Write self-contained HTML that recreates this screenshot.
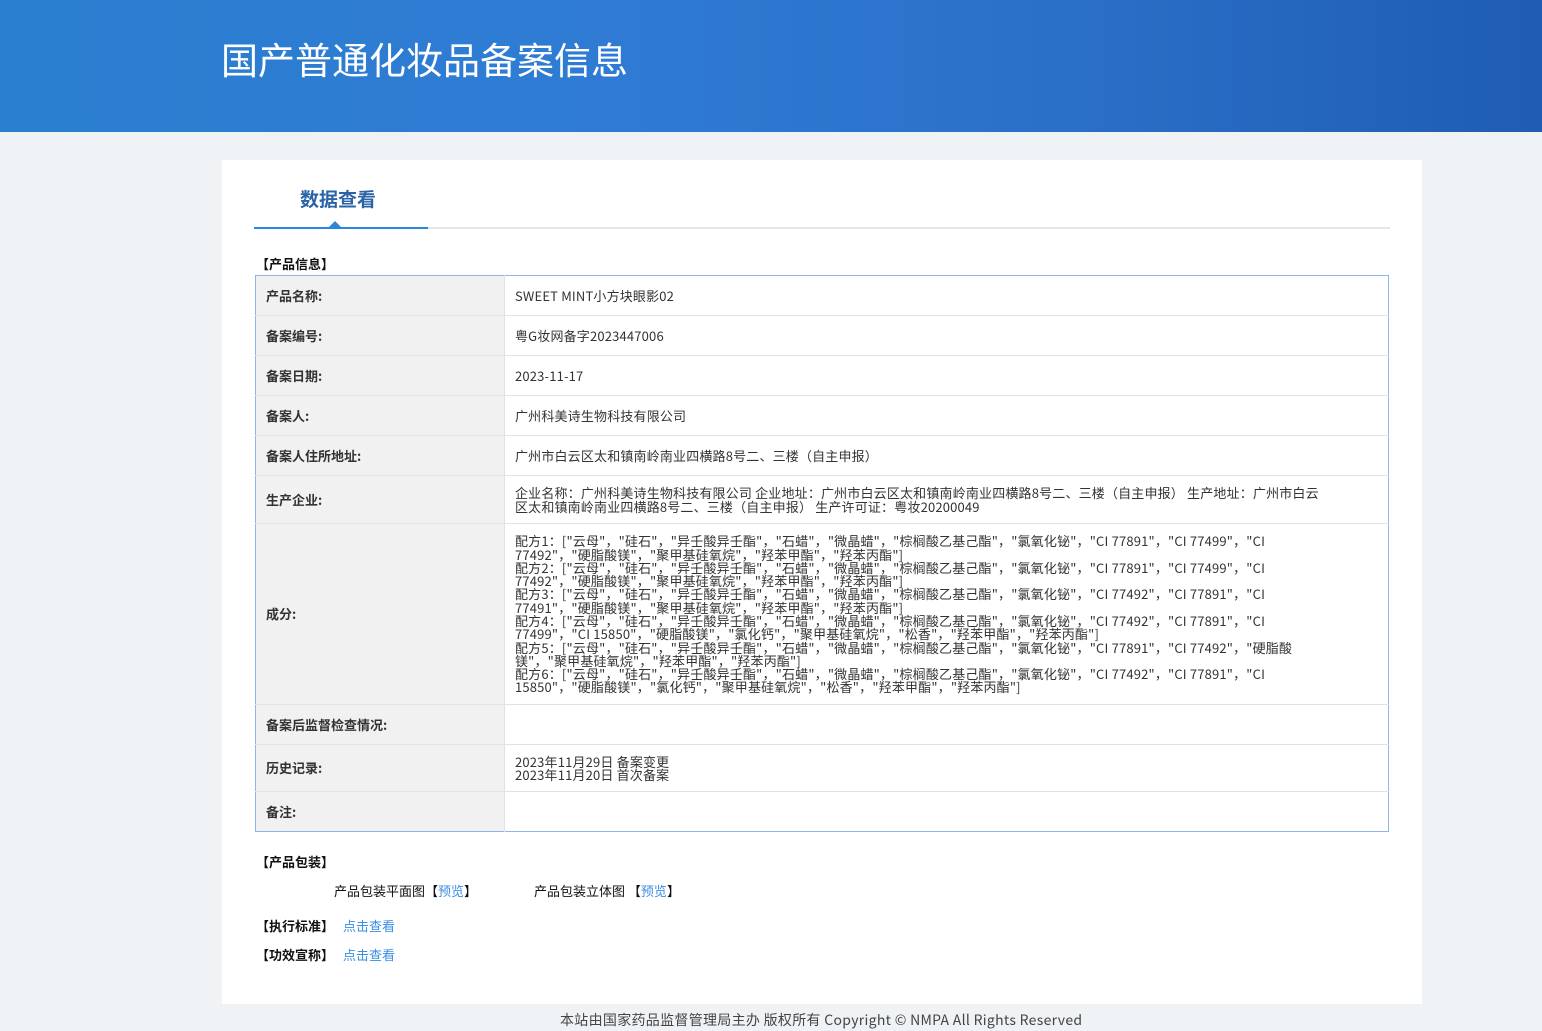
<!DOCTYPE html>
<html><head><meta charset="utf-8"><style>
*{margin:0;padding:0;box-sizing:border-box}
body{width:1542px;height:1031px;background:#eff3f6;font-family:"Noto Sans CJK SC","Liberation Sans",sans-serif;font-size:13px;color:#333;position:relative;overflow:hidden}
.hdr{position:absolute;left:0;top:0;width:1542px;height:132px;background:linear-gradient(90deg,#2a7fd0 0%,#2f7bd4 40%,#2a6fc8 70%,#1f5cb4 100%)}
.hdr h1{position:absolute;left:221px;top:33px;font-size:37px;line-height:50px;font-weight:normal;color:#fff;font-family:"Noto Sans CJK SC",sans-serif}
.card{position:absolute;left:222px;top:160px;width:1200px;height:844px;background:#fff}
.tab{position:absolute;left:78px;top:25px;font-size:19px;font-weight:bold;color:#2a63a8}
.sec{position:absolute;font-weight:bold;color:#111;font-size:13px;line-height:18px}
table{position:absolute;left:33px;top:115px;width:1134px;border:1px solid #8fb6ea;border-collapse:collapse}
td{border-top:1px solid #e2e2e2;vertical-align:middle;font-size:13px;line-height:18px}
td.l{width:249px;background:#f1f1f1;font-weight:bold;color:#333;padding-left:10px;border-right:1px solid #e2e2e2}
td.v{padding-left:10px;color:#333;letter-spacing:0.17px}
td.ing{line-height:13.3px}
a{color:#3a8ee6;text-decoration:none}
.foot{position:absolute;top:1010px;left:560px;white-space:nowrap;font-size:14px;line-height:20px;color:#444;letter-spacing:0.3px}
</style></head><body>
<div class="hdr"><h1>国产普通化妆品备案信息</h1></div>
<div class="card">
<div class="tab">数据查看</div>
<div style="position:absolute;left:32px;top:67px;width:1136px;height:2px;background:#e6e6e6"></div>
<div style="position:absolute;left:32px;top:67px;width:174px;height:2px;background:#2a86d8"></div>
<div style="position:absolute;left:107px;top:61px;width:0;height:0;border-left:6px solid transparent;border-right:6px solid transparent;border-bottom:6px solid #2a86d8"></div>
<div class="sec" style="left:34px;top:95px">【产品信息】</div>
<table>
<tr style="height:40px"><td class="l" style="border-top:none">产品名称:</td><td class="v" style="border-top:none">SWEET MINT小方块眼影02</td></tr>
<tr style="height:40px"><td class="l">备案编号:</td><td class="v">粤G妆网备字2023447006</td></tr>
<tr style="height:40px"><td class="l">备案日期:</td><td class="v">2023-11-17</td></tr>
<tr style="height:40px"><td class="l">备案人:</td><td class="v">广州科美诗生物科技有限公司</td></tr>
<tr style="height:40px"><td class="l">备案人住所地址:</td><td class="v">广州市白云区太和镇南岭南业四横路8号二、三楼（自主申报）</td></tr>
<tr style="height:48px"><td class="l">生产企业:</td><td class="v ing">企业名称：广州科美诗生物科技有限公司 企业地址：广州市白云区太和镇南岭南业四横路8号二、三楼（自主申报） 生产地址：广州市白云<br>区太和镇南岭南业四横路8号二、三楼（自主申报） 生产许可证：粤妆20200049</td></tr>
<tr style="height:181px"><td class="l">成分:</td><td class="v ing">配方1：["云母"，"硅石"，"异壬酸异壬酯"，"石蜡"，"微晶蜡"，"棕榈酸乙基己酯"，"氯氧化铋"，"CI 77891"，"CI 77499"，"CI<br>77492"，"硬脂酸镁"，"聚甲基硅氧烷"，"羟苯甲酯"，"羟苯丙酯"]<br>配方2：["云母"，"硅石"，"异壬酸异壬酯"，"石蜡"，"微晶蜡"，"棕榈酸乙基己酯"，"氯氧化铋"，"CI 77891"，"CI 77499"，"CI<br>77492"，"硬脂酸镁"，"聚甲基硅氧烷"，"羟苯甲酯"，"羟苯丙酯"]<br>配方3：["云母"，"硅石"，"异壬酸异壬酯"，"石蜡"，"微晶蜡"，"棕榈酸乙基己酯"，"氯氧化铋"，"CI 77492"，"CI 77891"，"CI<br>77491"，"硬脂酸镁"，"聚甲基硅氧烷"，"羟苯甲酯"，"羟苯丙酯"]<br>配方4：["云母"，"硅石"，"异壬酸异壬酯"，"石蜡"，"微晶蜡"，"棕榈酸乙基己酯"，"氯氧化铋"，"CI 77492"，"CI 77891"，"CI<br>77499"，"CI 15850"，"硬脂酸镁"，"氯化钙"，"聚甲基硅氧烷"，"松香"，"羟苯甲酯"，"羟苯丙酯"]<br>配方5：["云母"，"硅石"，"异壬酸异壬酯"，"石蜡"，"微晶蜡"，"棕榈酸乙基己酯"，"氯氧化铋"，"CI 77891"，"CI 77492"，"硬脂酸<br>镁"，"聚甲基硅氧烷"，"羟苯甲酯"，"羟苯丙酯"]<br>配方6：["云母"，"硅石"，"异壬酸异壬酯"，"石蜡"，"微晶蜡"，"棕榈酸乙基己酯"，"氯氧化铋"，"CI 77492"，"CI 77891"，"CI<br>15850"，"硬脂酸镁"，"氯化钙"，"聚甲基硅氧烷"，"松香"，"羟苯甲酯"，"羟苯丙酯"]</td></tr>
<tr style="height:40px"><td class="l">备案后监督检查情况:</td><td class="v"></td></tr>
<tr style="height:47px"><td class="l">历史记录:</td><td class="v ing">2023年11月29日 备案变更<br>2023年11月20日 首次备案</td></tr>
<tr style="height:40px"><td class="l">备注:</td><td class="v"></td></tr>
</table>
<div class="sec" style="left:34px;top:693px">【产品包装】</div>
<div style="position:absolute;left:112px;top:722px;color:#111;line-height:18px">产品包装平面图【<a>预览</a>】</div>
<div style="position:absolute;left:312px;top:722px;color:#111;line-height:18px">产品包装立体图 【<a>预览</a>】</div>
<div class="sec" style="left:34px;top:757px">【执行标准】 <a style="font-weight:normal;margin-left:6px">点击查看</a></div>
<div class="sec" style="left:34px;top:786px">【功效宣称】 <a style="font-weight:normal;margin-left:6px">点击查看</a></div>
</div>
<div class="foot">本站由国家药品监督管理局主办 版权所有 Copyright © NMPA All Rights Reserved</div>
</body></html>
